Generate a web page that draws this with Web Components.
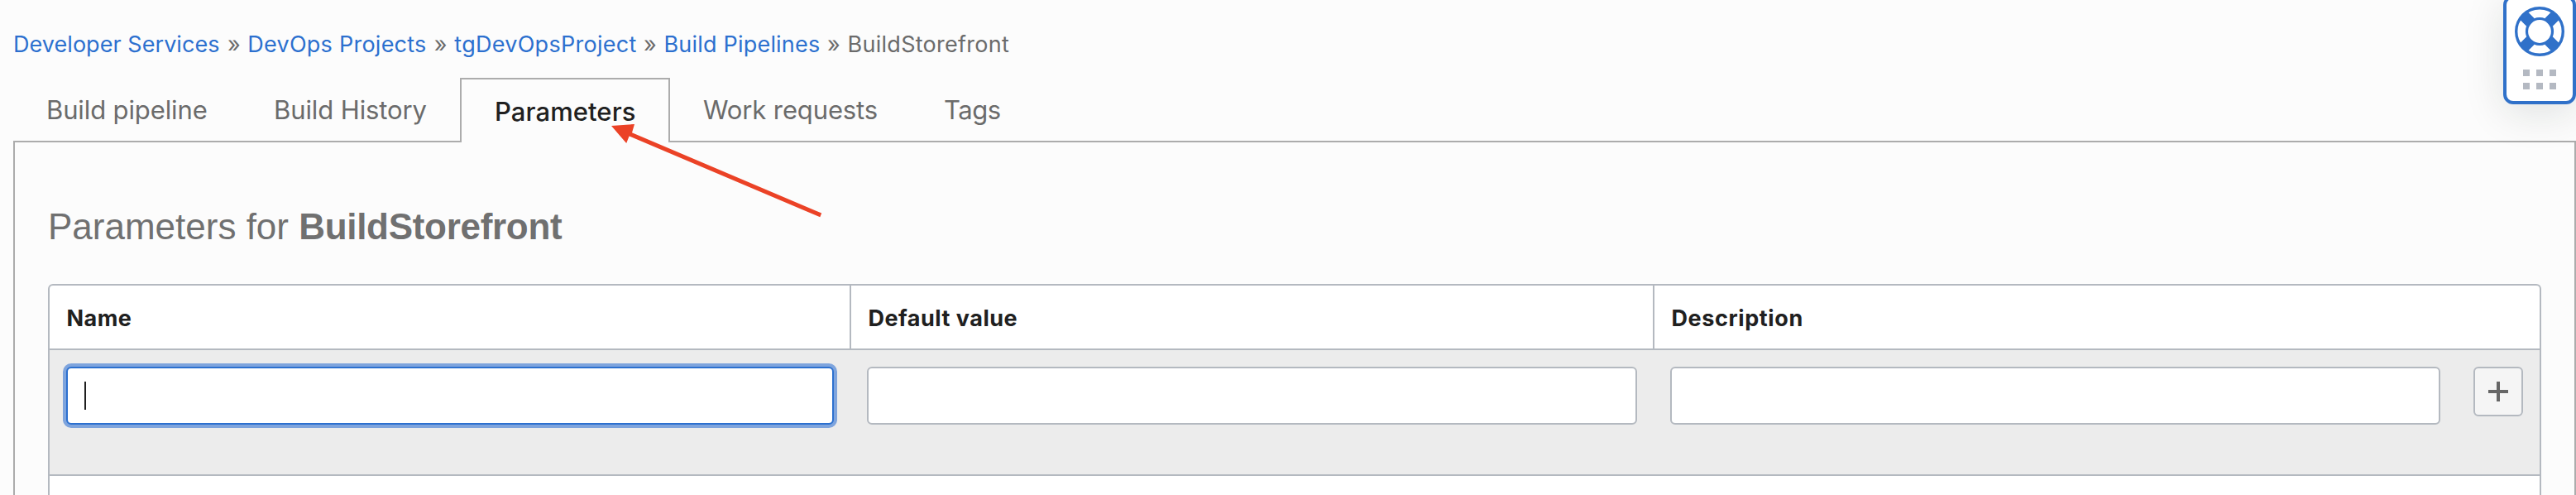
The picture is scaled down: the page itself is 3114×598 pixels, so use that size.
<!DOCTYPE html>
<html lang="en">
<head>
<meta charset="utf-8">
<title>BuildStorefront - Parameters</title>
<style>
  html, body { margin: 0; background: #fcfcfc; overflow: hidden; }
  body { height: 598px; position: relative; font-family: Inter, "Liberation Sans", sans-serif; color: #6b6b6b; }
</style>
</head>
<body>
<devops-page></devops-page>

<script>
const define = (name, html) => customElements.define(name, class extends HTMLElement {
  constructor() {
    super();
    this.attachShadow({ mode: 'open' }).innerHTML = html;
  }
});

define('bread-crumb', `
  <style>
    :host { display: flex; flex: none; justify-content: space-between; width: var(--w); font-size: 27px; line-height: 40px; letter-spacing: var(--ls, .2px); white-space: nowrap; color: #2c70cf; }
    :host([current]) { color: #6b6b6b; }
    i { font-style: normal; color: #6b6b6b; margin-right: 8.5px; }
    :host([current]) i { display: none; }
  </style><slot></slot><i>»</i>`);

define('bread-crumbs', `
  <style>:host { display: flex; height: 40px; padding: 34px 0 0 16px; }</style><slot></slot>`);

define('tab-item', `
  <style>
    :host { display: block; flex: none; box-sizing: border-box; width: var(--w); height: 76px; padding-left: 40px; font-size: 31px; line-height: 78px; letter-spacing: var(--ls, 0); white-space: nowrap; color: #6b6b6b; }
    :host([active]) { height: 78px; line-height: 77px; border: 2px solid #acacac; border-bottom: 0; background: #fcfcfc; color: #202020; font-weight: 500; z-index: 1; }
  </style><slot></slot>`);

define('tab-bar', `
  <style>:host { display: flex; height: 76px; margin-top: 20px; padding-left: 16px; }</style><slot></slot>`);

define('tab-panel', `
  <style>:host { display: block; box-sizing: border-box; height: 430px; margin-left: 16px; padding: 76px 40px 0 40px; border: 2px solid #acacac; border-bottom: 0; }</style><slot></slot>`);

define('panel-title', `
  <style>
    :host { display: block; height: 95px; line-height: 52px; font-family: "Liberation Sans", Arial, sans-serif; font-size: 44px; color: #707070; white-space: nowrap; }
    ::slotted(b) { letter-spacing: -.3px; }
  </style><slot></slot>`);

define('text-field', `
  <style>
    :host { display: flex; align-items: center; box-sizing: border-box; height: 70px; border: 2px solid #b4b9c0; border-radius: 6px; background: #fff; padding-left: 20px; }
    span { display: none; width: 2px; height: 34px; background: #202020; }
    :host([focused]) { border-color: #2c70cf; box-shadow: 0 0 0 4px #7ea4dd; }
    :host([focused]) span { display: block; }
  </style><span></span>`);

define('icon-button', `
  <style>
    :host { display: flex; align-items: center; justify-content: center; box-sizing: border-box; width: 60px; height: 60px; border: 2px solid #b4b9c0; border-radius: 6px; background: #f5f5f5; }
    svg { display: block; }
  </style>
  <svg width="24" height="24"><path d="M10 0h4v10h10v4H14v10h-4V14H0v-4h10z" fill="#666"/></svg>`);

define('column-head', `
  <style>
    :host { display: block; box-sizing: border-box; height: 76px; padding-left: 20.5px; line-height: 80px; font-size: 27px; font-weight: 700; color: #202020; letter-spacing: var(--ls); white-space: nowrap; border-right: 2px solid #b4b9c0; }
    :host(:last-child) { border-right: 0; }
  </style><slot></slot>`);

define('param-table', `
  <style>
    :host { display: block; box-sizing: border-box; height: 260px; border: 2px solid #b4b9c0; border-bottom: 0; border-radius: 6px 6px 0 0; background: #fff; overflow: hidden; }
    .head { display: grid; grid-template-columns: 969px 971px 1fr; height: 76px; border-bottom: 2px solid #b4b9c0; }
    .row { display: grid; grid-template-columns: 928px 931px 931px 60px; column-gap: 40px; align-items: start; height: 150px; box-sizing: border-box; padding: 20px 0 0 20px; background: #ececec; }
    .rule { height: 2px; background: #b4b9c0; }
  </style>
  <div class="head">
    <column-head style="--ls:.45px">Name</column-head>
    <column-head style="--ls:.5px">Default value</column-head>
    <column-head style="--ls:.6px">Description</column-head>
  </div>
  <div class="row">
    <text-field focused></text-field><text-field></text-field><text-field></text-field><icon-button></icon-button>
  </div>
  <div class="rule"></div>`);

define('help-widget', `
  <style>
    :host { display: block; position: absolute; right: 0; top: -6px; box-sizing: border-box; width: 88px; height: 132px; border: 4px solid #3071c9; border-radius: 12px; background: #fff; box-shadow: 0 10px 50px rgba(20,30,25,.12); z-index: 2; }
    svg { display: block; margin: 10px auto 0; }
    .grip { display: grid; grid-template-columns: repeat(3, 8px); gap: 8px; justify-content: center; margin-top: 16px; }
    .grip i { height: 8px; background: #b4b9c2; }
  </style>
  <svg width="60" height="60" viewBox="-30 -30 60 60" fill="none" stroke="#3071c9">
    <circle r="28.3" stroke-width="3.4"/>
    <circle r="15.5" stroke-width="3.2"/>
    <path stroke-width="13.4" d="M-11-11L-19.5-19.5M11-11L19.5-19.5M-11 11L-19.5 19.5M11 11L19.5 19.5"/>
  </svg>
  <div class="grip"><i></i><i></i><i></i><i></i><i></i><i></i></div>`);

define('pointer-arrow', `
  <style>
    :host { display: block; position: absolute; left: 725px; top: 140px; z-index: 3; }
    svg { display: block; }
  </style>
  <svg width="290" height="130" fill="#eb4226">
    <path d="M14 12L42 10L39 20.3L268.2 117.6L266.3 122.3L35.6 24.4L32.2 33z"/>
  </svg>`);

define('devops-page', `
  <style>:host { display: block; width: 3114px; height: 598px; overflow: hidden; }</style>
  <bread-crumbs>
    <bread-crumb style="--w:283.3px;--ls:.05px">Developer Services</bread-crumb>
    <bread-crumb style="--w:250px;--ls:.25px">DevOps Projects</bread-crumb>
    <bread-crumb style="--w:253.2px;--ls:.28px">tgDevOpsProject</bread-crumb>
    <bread-crumb style="--w:222px">Build Pipelines</bread-crumb>
    <bread-crumb current style="--ls:.28px">BuildStorefront</bread-crumb>
  </bread-crumbs>
  <tab-bar>
    <tab-item style="--w:275px;--ls:-.12px">Build pipeline</tab-item>
    <tab-item style="--w:265px;--ls:-.1px">Build History</tab-item>
    <tab-item active style="--w:254px;--ls:.08px">Parameters</tab-item>
    <tab-item style="--w:291px;--ls:-.12px">Work requests</tab-item>
    <tab-item style="--w:150px;--ls:-.5px">Tags</tab-item>
  </tab-bar>
  <tab-panel>
    <panel-title>Parameters for <b>BuildStorefront</b></panel-title>
    <param-table></param-table>
  </tab-panel>
  <help-widget></help-widget>
  <pointer-arrow></pointer-arrow>`);
</script>
</body>
</html>
